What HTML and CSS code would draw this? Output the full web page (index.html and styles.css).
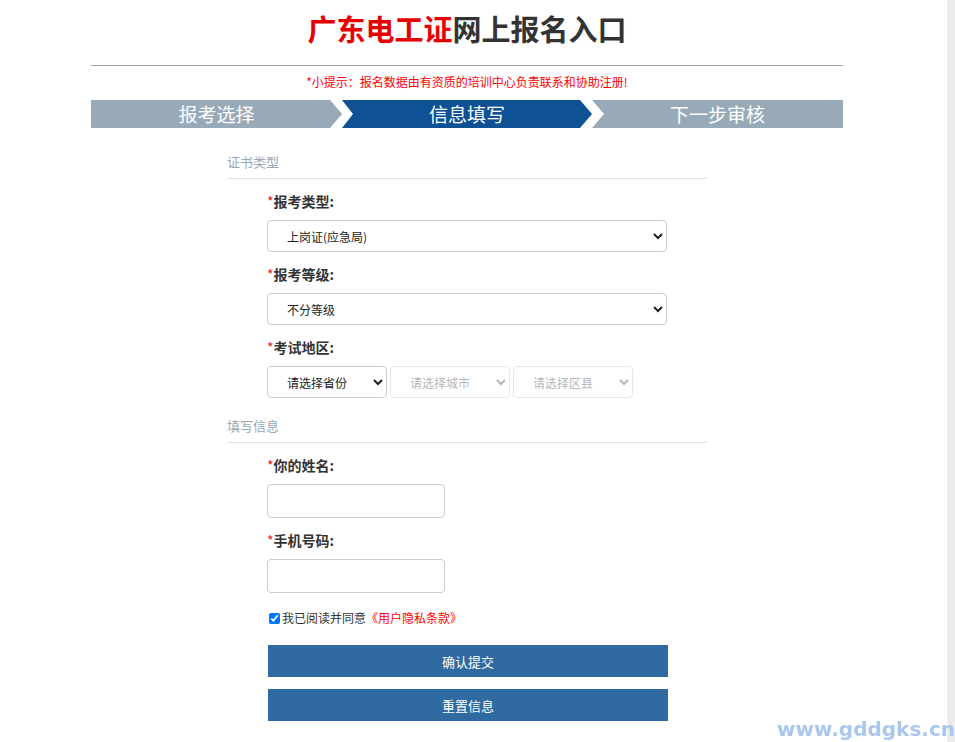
FILE: index.html
```html
<!DOCTYPE html>
<html lang="zh-CN">
<head>
    <meta charset="UTF-8">
    <meta name="viewport" content="width=device-width, initial-scale=1.0">
    <title>广东电工证网上报名入口</title>
    <link rel="stylesheet" href="styles.css">
</head>
<body>

    <div class="wrap">
        <header class="top">
            <h1><span class="red">广东电工证</span>网上报名入口</h1>
        </header>
        <p class="tip">*小提示：报名数据由有资质的培训中心负责联系和协助注册!</p>

        <div class="steps">
            <div class="step first">报考选择</div>
            <div class="step active">信息填写</div>
            <div class="step last">下一步审核</div>
        </div>

        <form class="form">
            <div class="sec-title">证书类型</div>
            <div class="row">
                <label><i>*</i>报考类型:</label>
                <select class="sel-long">
                    <option>上岗证(应急局)</option>
                </select>
            </div>
            <div class="row">
                <label><i>*</i>报考等级:</label>
                <select class="sel-long">
                    <option>不分等级</option>
                </select>
            </div>
            <div class="row">
                <label><i>*</i>考试地区:</label>
                <div class="area">
                    <select class="sel-short">
                        <option>请选择省份</option>
                    </select>
                    <select class="sel-short" disabled>
                        <option>请选择城市</option>
                    </select>
                    <select class="sel-short" disabled>
                        <option>请选择区县</option>
                    </select>
                </div>
            </div>

            <div class="sec-title info">填写信息</div>
            <div class="row">
                <label><i>*</i>你的姓名:</label>
                <input type="text" class="txt">
            </div>
            <div class="row">
                <label><i>*</i>手机号码:</label>
                <input type="text" class="txt">
            </div>
            <div class="agree">
                <input type="checkbox" checked>我已阅读并同意<a href="#">《用户隐私条款》</a>
            </div>
            <button type="button" class="btn">确认提交</button>
            <button type="reset" class="btn">重置信息</button>
        </form>
    </div>

    <div class="scroll-track"></div>
    <div class="watermark">www.gddgks.cn</div>

</body>
</html>
```

FILE: styles.css
```css
body {
    margin: 0;
    padding: 0;
    background-color: #fff;
    font-family: "Noto Sans CJK SC", "Noto Sans", sans-serif;
    color: #333;
}

.wrap {
    width: 752px;
    margin-left: 91px;
}

.top {
    border-bottom: 1px solid #9aa6b2;
    height: 65px;
}

.top h1 {
    margin: 0;
    padding-top: 8px;
    text-align: center;
    font-size: 29px;
    line-height: 40px;
    font-weight: bold;
    color: #333;
}

.top .red {
    color: #e60000;
}

.tip {
    margin: 0;
    padding-top: 7px;
    height: 27px;
    text-align: center;
    font-size: 12px;
    line-height: 18px;
    color: #f00;
}

/* 步骤条 */
.steps {
    display: flex;
    height: 28px;
}

.step {
    color: #fff;
    font-size: 19px;
    line-height: 28px;
    text-align: center;
    background-color: #98aab7;
}

.step.first {
    width: 251px;
    clip-path: polygon(0 0, calc(100% - 12px) 0, 100% 50%, calc(100% - 12px) 100%, 0 100%);
}

.step.active {
    width: 250px;
    background-color: #0e5194;
    clip-path: polygon(0 0, calc(100% - 12px) 0, 100% 50%, calc(100% - 12px) 100%, 0 100%, 11px 50%);
}

.step.last {
    width: 251px;
    clip-path: polygon(0 0, 100% 0, 100% 100%, 0 100%, 12px 50%);
}

/* 表单 */
.form {
    width: 480px;
    margin: 0 auto;
    padding-top: 24px;
}

.sec-title {
    font-size: 13px;
    line-height: 20px;
    color: #97a5b6;
    padding-bottom: 6px;
    border-bottom: 1px solid #e2e2e2;
    margin-bottom: 12px;
}

.sec-title.info {
    margin-top: 18px;
}

.row {
    padding-left: 40px;
    margin-bottom: 12px;
}

.row label {
    display: block;
    font-size: 14px;
    font-weight: bold;
    line-height: 20px;
    margin-bottom: 9px;
}

.row label i {
    font-style: normal;
    font-weight: normal;
    color: #e02020;
}

select {
    height: 32px;
    border: 1px solid #ccc;
    border-radius: 4px;
    background-color: #fff;
    font-family: "Noto Sans CJK SC", sans-serif;
    font-size: 12px;
    color: #222;
    padding-left: 15px;
}

select:disabled {
    color: #999;
    border-color: #ddd;
}

.sel-long {
    width: 400px;
    display: block;
}

.area {
    display: flex;
    gap: 3px;
}

.sel-short {
    width: 120px;
}

.txt {
    display: block;
    width: 178px;
    height: 34px;
    box-sizing: border-box;
    border: 1px solid #ccc;
    border-radius: 4px;
}

.agree {
    padding-left: 42px;
    font-size: 12px;
    line-height: 18px;
    color: #333;
    display: flex;
    align-items: center;
    margin-top: 16px;
}

.agree input {
    width: 11px;
    height: 11px;
    margin: 0 2px 0 0;
}

.agree a {
    color: #f00;
    text-decoration: none;
}

.btn {
    display: block;
    width: 400px;
    height: 32px;
    margin: 18px 0 0 41px;
    border: none;
    background-color: #2f6aa1;
    color: #fff;
    font-family: "Noto Sans CJK SC", sans-serif;
    font-size: 13px;
}

.btn + .btn {
    margin-top: 12px;
}

.scroll-track {
    position: fixed;
    top: 0;
    right: 0;
    width: 8px;
    height: 100%;
    background-color: #ececec;
}

.watermark {
    position: fixed;
    right: 0;
    bottom: 0;
    font-family: "DejaVu Sans", sans-serif;
    font-weight: bold;
    font-size: 20px;
    line-height: 26px;
    color: #a9c7ef;
}
```
